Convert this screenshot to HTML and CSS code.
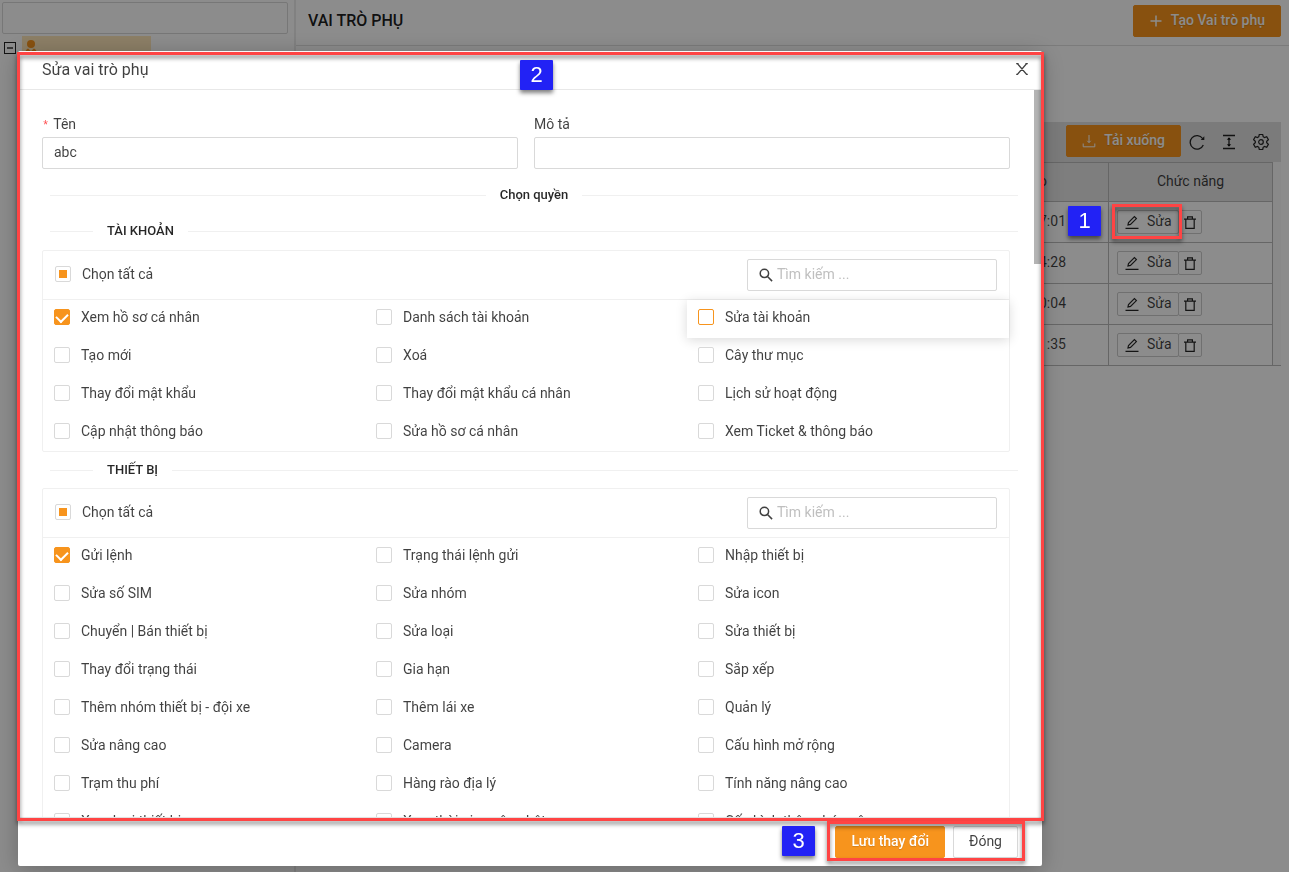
FILE: index.html
```html
<!DOCTYPE html>
<html lang="vi">
<head>
<meta charset="utf-8">
<title>Vai trò phụ</title>
<link rel="stylesheet" href="styles.css">
</head>
<body>
<svg class="defs" aria-hidden="true">
  <symbol id="i-edit" viewBox="0 0 14 14"><path d="M3 9.900l.5-2.400L9.400 1.600l2 2L5.500 9.400z M.5 13.300h13" fill="none" stroke="currentColor" stroke-width="1.200"/></symbol>
  <symbol id="i-trash" viewBox="0 0 14 14"><path d="M1 4.200h12M2.800 4.200v9.100h8.400V4.200M4.600 4V1.800h4.800v2.200" fill="none" stroke="currentColor" stroke-width="1.200"/></symbol>
  <symbol id="i-search" viewBox="0 0 14 14"><path d="M5.400 1.200a4.200 4.200 0 1 0 0 8.400a4.200 4.200 0 0 0 0-8.400zM8.500 8.500l4.600 4.600" fill="none" stroke="currentColor" stroke-width="1.500"/></symbol>
</svg>
<div class="page">
  <aside class="sidebar">
    <input class="field tree-search" type="text" aria-label="Tìm">
    <div class="tree">
      <button class="toggle" type="button" aria-label="Thu gọn"></button>
      <span class="node"><svg class="user" viewBox="0 0 14 14"><circle cx="7" cy="4" r="4" fill="#f7941d"/><path d="M1 14c0-3 1.500-5 3-5.500L7 11l3-2.500c1.500.5 3 2.500 3 5.500z" fill="#f7941d"/></svg></span>
    </div>
  </aside>
  <main class="main">
    <header class="topbar">
      <h1>VAI TRÒ PHỤ</h1>
      <button class="btn primary create" type="button"><svg class="ico" viewBox="0 0 14 14"><path d="M7 1.500v11M1.500 7h11" fill="none" stroke="currentColor" stroke-width="1.500"/></svg>Tạo Vai trò phụ</button>
    </header>
    <section class="list">
      <div class="tools">
        <button class="btn primary download" type="button"><svg class="ico" viewBox="0 0 14 14"><path d="M7 1v7.500M5.300 6.800L7 8.600l1.700-1.800M1.200 9.500v3.300h11.600V9.500" fill="none" stroke="currentColor" stroke-width="1"/></svg>Tải xuống</button>
        <button class="tool" type="button" aria-label="Tải lại"><svg viewBox="0 0 16 16"><path d="M14.300 11A6.800 6.800 0 1 1 13.600 4.500" fill="none" stroke="currentColor" stroke-width="1.300"/><path d="M15.300 2.300v3.600h-3.600z" fill="currentColor"/></svg></button>
        <button class="tool" type="button" aria-label="Chiều cao dòng"><svg viewBox="0 0 16 16"><path d="M2 1.500h12M2 14.500h12M8 4v8" fill="none" stroke="currentColor" stroke-width="1.300"/><path d="M8 3.200l2.200 2.600H5.800zM8 12.800l2.200-2.600H5.800z" fill="currentColor"/></svg></button>
        <button class="tool" type="button" aria-label="Cài đặt"><svg viewBox="0 0 16 16"><path d="M6.300 1h3.400l.5 2.200 1.300.8 2.200-.7 1.700 2.900-1.700 1.600v1.400l1.700 1.600-1.700 2.900-2.200-.7-1.300.8-.5 2.200H6.300l-.5-2.200-1.300-.8-2.200.7L.6 10.800l1.700-1.600V7.800L.6 6.200l1.700-2.900 2.200.7 1.300-.8z" transform="translate(0 -.5)" fill="none" stroke="currentColor" stroke-width="1.200"/><circle cx="8" cy="8" r="2.300" fill="none" stroke="currentColor" stroke-width="1.200"/></svg></button>
      </div>
      <div class="table-wrap">
        <table>
          <thead><tr><th class="date">o</th><th class="act">Chức năng</th></tr></thead>
          <tbody>
            <tr><td class="date">7:01</td><td><div class="acts"><button class="mini edit" type="button"><svg><use href="#i-edit"/></svg>Sửa</button><button class="mini del" type="button" aria-label="Xoá"><svg><use href="#i-trash"/></svg></button></div></td></tr>
            <tr><td class="date">4:28</td><td><div class="acts"><button class="mini edit" type="button"><svg><use href="#i-edit"/></svg>Sửa</button><button class="mini del" type="button" aria-label="Xoá"><svg><use href="#i-trash"/></svg></button></div></td></tr>
            <tr><td class="date">0:04</td><td><div class="acts"><button class="mini edit" type="button"><svg><use href="#i-edit"/></svg>Sửa</button><button class="mini del" type="button" aria-label="Xoá"><svg><use href="#i-trash"/></svg></button></div></td></tr>
            <tr><td class="date">:35</td><td><div class="acts"><button class="mini edit" type="button"><svg><use href="#i-edit"/></svg>Sửa</button><button class="mini del" type="button" aria-label="Xoá"><svg><use href="#i-trash"/></svg></button></div></td></tr>
          </tbody>
        </table>
      </div>
    </section>
  </main>
</div>

<div class="mask">
  <div class="modal" role="dialog" aria-labelledby="dlg-title">
    <header class="modal-head">
      <h2 id="dlg-title">Sửa vai trò phụ</h2>
      <button class="close" type="button" aria-label="Đóng cửa sổ"><svg viewBox="0 0 12 12"><path d="M1.300.5l9.400 11M10.700.5L1.300 11.500M.2.600h2.400M9.400.6h2.400M.2 11.400h2.400M9.400 11.400h2.400" fill="none" stroke="currentColor" stroke-width="1.200"/></svg></button>
    </header>
    <div class="modal-body">
      <div class="scroll">
        <div class="form">
          <div class="group"><label class="required" for="name">Tên</label><input class="field" id="name" type="text" value="abc"></div>
          <div class="group"><label for="desc">Mô tả</label><input class="field" id="desc" type="text"></div>
        </div>
        <h3 class="divider center">Chọn quyền</h3>

        <h3 class="divider">TÀI KHOẢN</h3>
        <section class="card">
          <div class="card-head">
            <label class="all"><input class="check partial" type="checkbox">Chọn tất cả</label>
            <div class="search"><svg><use href="#i-search"/></svg><input type="text" placeholder="Tìm kiếm ..." aria-label="Tìm kiếm tài khoản"></div>
          </div>
          <div class="grid">
            <label class="item"><input class="check" type="checkbox" checked>Xem hồ sơ cá nhân</label>
            <label class="item"><input class="check" type="checkbox">Danh sách tài khoản</label>
            <label class="item hovered"><input class="check" type="checkbox">Sửa tài khoản</label>
            <label class="item"><input class="check" type="checkbox">Tạo mới</label>
            <label class="item"><input class="check" type="checkbox">Xoá</label>
            <label class="item"><input class="check" type="checkbox">Cây thư mục</label>
            <label class="item"><input class="check" type="checkbox">Thay đổi mật khẩu</label>
            <label class="item"><input class="check" type="checkbox">Thay đổi mật khẩu cá nhân</label>
            <label class="item"><input class="check" type="checkbox">Lịch sử hoạt động</label>
            <label class="item"><input class="check" type="checkbox">Cập nhật thông báo</label>
            <label class="item"><input class="check" type="checkbox">Sửa hồ sơ cá nhân</label>
            <label class="item"><input class="check" type="checkbox">Xem Ticket &amp; thông báo</label>
          </div>
        </section>

        <h3 class="divider">THIẾT BỊ</h3>
        <section class="card">
          <div class="card-head">
            <label class="all"><input class="check partial" type="checkbox">Chọn tất cả</label>
            <div class="search"><svg><use href="#i-search"/></svg><input type="text" placeholder="Tìm kiếm ..." aria-label="Tìm kiếm thiết bị"></div>
          </div>
          <div class="grid">
            <label class="item"><input class="check" type="checkbox" checked>Gửi lệnh</label>
            <label class="item"><input class="check" type="checkbox">Trạng thái lệnh gửi</label>
            <label class="item"><input class="check" type="checkbox">Nhập thiết bị</label>
            <label class="item"><input class="check" type="checkbox">Sửa số SIM</label>
            <label class="item"><input class="check" type="checkbox">Sửa nhóm</label>
            <label class="item"><input class="check" type="checkbox">Sửa icon</label>
            <label class="item"><input class="check" type="checkbox">Chuyển | Bán thiết bị</label>
            <label class="item"><input class="check" type="checkbox">Sửa loại</label>
            <label class="item"><input class="check" type="checkbox">Sửa thiết bị</label>
            <label class="item"><input class="check" type="checkbox">Thay đổi trạng thái</label>
            <label class="item"><input class="check" type="checkbox">Gia hạn</label>
            <label class="item"><input class="check" type="checkbox">Sắp xếp</label>
            <label class="item"><input class="check" type="checkbox">Thêm nhóm thiết bị - đội xe</label>
            <label class="item"><input class="check" type="checkbox">Thêm lái xe</label>
            <label class="item"><input class="check" type="checkbox">Quản lý</label>
            <label class="item"><input class="check" type="checkbox">Sửa nâng cao</label>
            <label class="item"><input class="check" type="checkbox">Camera</label>
            <label class="item"><input class="check" type="checkbox">Cấu hình mở rộng</label>
            <label class="item"><input class="check" type="checkbox">Trạm thu phí</label>
            <label class="item"><input class="check" type="checkbox">Hàng rào địa lý</label>
            <label class="item"><input class="check" type="checkbox">Tính năng nâng cao</label>
            <label class="item"><input class="check" type="checkbox">Xem loại thiết bị</label>
            <label class="item"><input class="check" type="checkbox">Xem thời gian cập nhật</label>
            <label class="item"><input class="check" type="checkbox">Cấu hình thông báo nâng cao</label>
          </div>
        </section>
      </div>
      <div class="track"><div class="thumb"></div></div>
    </div>
    <footer class="modal-foot">
      <button class="btn primary" type="button">Lưu thay đổi</button>
      <button class="btn plain" type="button">Đóng</button>
    </footer>
  </div>
</div>

<div class="frame frame-dialog"></div>
<div class="frame frame-edit"></div>
<div class="frame frame-actions"></div>
<div class="step step-edit">1</div>
<div class="step step-dialog">2</div>
<div class="step step-actions">3</div>
</body>
</html>
```

FILE: styles.css
```css
* { box-sizing: border-box; }
body {
  margin: 0;
  height: 100vh;
  overflow: hidden;
  background: #fff;
  color: rgba(0, 0, 0, .75);
  font: 14px/20px Roboto, "Noto Sans", sans-serif;
}
button, input { font: inherit; color: inherit; margin: 0; }
h1, h2, h3 { margin: 0; }
.defs { position: absolute; width: 0; height: 0; }

.field {
  width: 100%;
  height: 32px;
  padding: 0 11px 2px;
  border: 1px solid #d9d9d9;
  border-radius: 2px;
  background: #fff;
  outline: none;
}
.btn {
  display: inline-flex;
  align-items: center;
  justify-content: center;
  gap: 8px;
  height: 32px;
  padding: 0 15px 2px;
  border: 1px solid #d9d9d9;
  border-radius: 2px;
  background: #fff;
}
.primary {
  border-color: #f7941d;
  background: #f7941d;
  color: #fff;
  font-weight: 500;
  text-shadow: 0 1px 1px rgba(0, 0, 0, .15);
}
.ico { width: 14px; height: 14px; margin-top: 2px; }

/* Page behind the dialog */
.page { display: flex; height: 100%; }
.sidebar { flex: 0 0 296px; padding: 2px 6px 0 2px; border-right: 2px solid #ebebeb; }
.tree { display: flex; align-items: flex-start; gap: 6px; padding: 2px 0 0 2px; }
.toggle { width: 12px; height: 12px; margin-top: 6px; padding: 0; border: 1px solid #222; background: #fff; display: flex; align-items: center; justify-content: center; }
.toggle::before { content: ""; width: 6px; height: 2px; background: #666; }
.node { width: 129px; height: 24px; padding: 4px 2px; background: #ffe7ba; }
.user { width: 14px; height: 14px; display: block; }
.main { flex: 1; min-width: 0; }
.topbar { display: flex; align-items: center; justify-content: space-between; height: 46px; padding: 0 8px 4px 12px; border-bottom: 1px solid #e0e0e0; }
.topbar h1 { font-size: 16px; font-weight: 500; color: rgba(0, 0, 0, .9); }
.list { padding: 76px 8px 0 0; }
.tools { display: flex; align-items: center; justify-content: flex-end; gap: 16px; height: 40px; padding: 0 12px 2px; background: #e0e0e0; }
.tool { width: 16px; height: 18px; padding: 2px 0 0; border: 0; background: none; color: rgba(0, 0, 0, .85); }
.tool svg { display: block; width: 16px; height: 16px; }
.download { margin-right: -8px; }
.table-wrap { padding-right: 8px; background: #fafafa; border-bottom: 1px solid #bbb; }
table { width: 100%; border-collapse: collapse; background: #fff; margin-bottom: -1px; }
th, td { border: 1px solid #bbb; font-weight: 400; height: 41px; padding: 0 8px; }
th { height: 39px; padding-bottom: 2px; background: #e6e6e6; }
.act { width: 164px; }
th.act { text-align: center; }
.date { text-align: right; padding-right: 42px; }
td.date { padding-bottom: 2px; }
th.date { padding-right: 61px; }
.acts { display: flex; }
.mini { display: flex; align-items: center; height: 24px; padding: 0 0 2px; border: 1px solid #ccc; border-radius: 2px; background: #fff; }
.mini svg { width: 14px; height: 14px; margin-top: 2px; color: rgba(0, 0, 0, .85); }
.edit { width: 62px; gap: 8px; padding-left: 7px; }
.del { width: 24px; margin-left: -1px; justify-content: center; }

/* Dialog */
.mask { position: fixed; inset: 0; display: flex; padding: 51px 18px 6px; background: rgba(0, 0, 0, .45); }
.modal { flex: 1; display: flex; flex-direction: column; max-width: 1024px; background: #fff; border-radius: 2px; box-shadow: 0 4px 24px rgba(0, 0, 0, .25); }
.modal-head { display: flex; align-items: center; justify-content: space-between; height: 39px; padding: 0 14px 0 24px; border-bottom: 1px solid #e8e8e8; }
.modal-head h2 { font-size: 16px; font-weight: 400; line-height: 20px; }
.close { width: 12px; height: 14px; padding: 0 0 2px; border: 0; background: none; }
.close svg { display: block; width: 12px; height: 12px; }
.modal-body { flex: 1; min-height: 0; display: flex; }
.scroll { flex: 1; min-width: 0; overflow: hidden; padding: 24px 24px 0; }
.track { flex: 0 0 8px; background: #fff; }
.thumb { height: 24%; background: #b4b4b4; }
.modal-foot { display: flex; justify-content: flex-end; gap: 8px; height: 49px; padding: 8px 24px; border-top: 1px solid #e8e8e8; }

.form { display: flex; gap: 16px; }
.group { flex: 1; display: flex; flex-direction: column; gap: 3px; }
.required::before { content: "*"; margin-right: 4px; color: #ff4d4f; font: 12px/12px "Liberation Mono", monospace; }
.divider {
  display: flex;
  align-items: center;
  gap: 14px;
  height: 36px;
  margin: 0 -8px 0 8px;
  font-size: 13px;
  font-weight: 500;
  line-height: 20px;
  color: rgba(0, 0, 0, .85);
}
.form + .divider { margin-top: 8px; }
.divider::before, .divider::after { content: ""; flex: 1; height: 1px; background: #f0f0f0; }
.divider:not(.center)::before { flex: 0 0 43px; }

.card { border: 1px solid #f0f0f0; border-radius: 2px; }
.card:first-of-type { margin-top: 1px; }
.card-head { display: flex; align-items: center; justify-content: space-between; height: 49px; padding: 0 12px; border-bottom: 1px solid #f0f0f0; }
.all { display: flex; align-items: center; gap: 11px; padding-bottom: 2px; }
.search { display: flex; align-items: center; width: 250px; height: 32px; padding: 0 11px; gap: 4px; border: 1px solid #d9d9d9; border-radius: 2px; }
.search svg { flex: 0 0 14px; height: 14px; }
.search input { flex: 1; min-width: 0; padding: 0 0 2px; border: 0; outline: none; background: none; }
.search input::placeholder { color: #bfbfbf; opacity: 1; }
.grid { display: grid; grid-template-columns: repeat(3, 1fr); grid-auto-rows: 38px; margin-bottom: -1px; }
.item { display: flex; align-items: center; gap: 11px; padding: 0 11px 4px; }
.hovered { box-shadow: 0 2px 12px rgba(0, 0, 0, .15); background: #fff; }
.hovered .check { border-color: #f7941d; }

.check { appearance: none; flex: 0 0 16px; height: 16px; border: 1px solid #d9d9d9; border-radius: 2px; background: #fff; display: grid; place-items: center; }
.check:checked { border-color: #f7941d; background: #f7941d; }
.check:checked::before { content: ""; width: 6px; height: 9px; margin-top: -2px; border: solid #fff; border-width: 0 2px 2px 0; transform: rotate(45deg); }
.partial::before { content: ""; width: 8px; height: 8px; background: #f7941d; }

/* Guide annotations laid over the screen */
.frame { position: absolute; border: 3px solid #ff4444; filter: drop-shadow(0 3px 2px rgba(0, 0, 0, .5)); pointer-events: none; }
.frame-dialog { left: 17px; top: 52px; width: 1027px; height: 769px; }
.frame-edit { left: 1112px; top: 204px; width: 70px; height: 35px; }
.frame-actions { left: 827px; top: 821px; width: 198px; height: 40px; }
.step { position: absolute; width: 33px; height: 30px; border-radius: 1px; background: #2222f5; color: #fff; font: 22px/30px "Liberation Sans", Arial, sans-serif; text-align: center; box-shadow: 0 3px 4px rgba(0, 0, 0, .5); }
.step-edit { left: 1068px; top: 206px; }
.step-dialog { left: 520px; top: 60px; }
.step-actions { left: 782px; top: 826px; }
```
